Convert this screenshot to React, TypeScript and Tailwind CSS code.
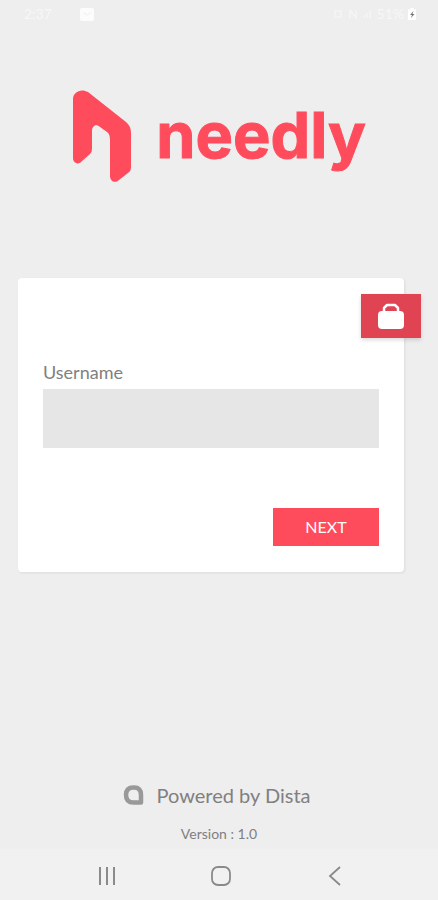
import React from "react";

function StatusBar() {
  return (
    <div className="flex h-7 items-center justify-between pr-[22px] pl-6 text-sm text-[#f7f7f7]">
      <div className="flex items-center">
        <span>2:37</span>
        <svg className="ml-7 h-[13px] w-[14px]" viewBox="0 0 14 13" aria-hidden="true">
          <rect width="14" height="13" rx="2" fill="#fcfcfc" />
          <path d="M3 4.500 7 7l4-2.500" fill="none" stroke="#f0f0f0" />
        </svg>
      </div>
      <div className="flex items-center gap-1">
        <svg className="h-3 w-10" viewBox="0 0 40 12" fill="none" stroke="#f5f5f5" strokeWidth="1.500" aria-hidden="true">
          <path d="M2 3h6v6H2zM17 2v8M17 2l6 8V2M31 10V7M34 10V5M37 10V2" />
        </svg>
        <span>51%</span>
        <svg className="h-3 w-2" viewBox="0 0 8 12" aria-hidden="true">
          <path d="M2.500 0h3v1.500H8V12H0V1.500h2.500z" fill="#fff" />
          <path d="M5.500 3 2 7h2l-1 3 3.500-4h-2z" fill="#777" />
        </svg>
      </div>
    </div>
  );
}

function Logo() {
  return (
    <h1 className="flex items-start justify-center pt-[61px] text-[#ff4c5d]">
      <svg className="h-[94px] w-[60px]" viewBox="0 0 60 94" fill="currentColor" aria-hidden="true">
        <path d="M1 10C1 3 9-1 16 3L54 33Q59 37 59 44V79Q59 82 56 84L47 91C43 95 38 92 38 87V51Q38 45 35 43L28 38C24 34 20 37 20 42V60Q20 63 18 65L9 73C6 76 1 74 1 69Z" />
      </svg>
      <span className="ml-6 pt-1.5 font-['Inter','Lato',sans-serif] text-[63px] leading-[80px] font-bold [-webkit-text-stroke:1px_#ff4c5d] [stroke-linejoin:round]">
        needly
      </span>
    </h1>
  );
}

function LoginCard() {
  return (
    <form
      className="relative mt-[95px] mr-[34px] ml-[18px] rounded-[4px] bg-white px-[25px] pt-[82px] pb-[26px] shadow-[1px_1px_3px_rgba(0,0,0,0.08)]"
      onSubmit={(e) => e.preventDefault()}
    >
      <button
        type="button"
        aria-label="Unlock"
        className="absolute top-4 -right-[17px] flex h-11 w-[60px] items-center justify-center bg-[#e04453] shadow-[0_2px_4px_rgba(0,0,0,0.15)]"
      >
        <svg className="h-[27px] w-[26px]" viewBox="0 0 26 27" aria-hidden="true">
          <path d="M6 10V5L9 2H17L20 5V10" fill="none" stroke="#fff" strokeWidth="2.500" strokeLinejoin="round" />
          <rect x="0" y="8" width="26" height="18" rx="4" fill="#fff" />
        </svg>
      </button>
      <label htmlFor="username" className="block text-lg leading-6 text-[#808080]">
        Username
      </label>
      <input
        id="username"
        type="text"
        className="mt-[5px] block h-[59px] w-full bg-[#e6e6e6] px-3 text-lg text-[#555] outline-none"
      />
      <div className="mt-[60px] flex justify-end">
        <button type="submit" className="h-[38px] w-[106px] bg-[#ff4c5d] text-base text-white">
          NEXT
        </button>
      </div>
    </form>
  );
}

function Footer() {
  return (
    <footer className="mt-auto flex flex-col items-center pb-[5px] text-[#808080]">
      <div className="flex items-center gap-3 pr-1">
        <svg className="h-5 w-[21px]" viewBox="0 0 21 20" fill="none" aria-hidden="true">
          <path d="M10.500 2.500H11Q18 2.500 18 10V17.500H10.500Q3 17.500 3 10T10.500 2.500Z" stroke="#999" strokeWidth="4.500" strokeLinejoin="round" />
        </svg>
        <span className="text-xl leading-7">Powered by Dista</span>
      </div>
      <p className="mt-[15px] text-sm leading-5">Version : 1.0</p>
    </footer>
  );
}

function NavBar() {
  return (
    <nav className="flex h-[51px] items-center justify-center gap-[90px] bg-[#f1f1f1] pt-[3px] pl-1 text-[#8a8a8a]">
      <button type="button" aria-label="Recent apps">
        <svg className="size-6" viewBox="0 0 24 24" fill="none" stroke="currentColor" strokeWidth="2">
          <path d="M5 3V21M12 3V21M19 3V21" />
        </svg>
      </button>
      <button type="button" aria-label="Home">
        <svg className="size-6" viewBox="0 0 24 24" fill="none" stroke="currentColor" strokeWidth="1.800">
          <rect x="3" y="3" width="18" height="18" rx="6" />
        </svg>
      </button>
      <button type="button" aria-label="Back">
        <svg className="size-6" viewBox="0 0 24 24" fill="none" stroke="currentColor" strokeWidth="1.800">
          <path d="M17 3 7 12l10 9" />
        </svg>
      </button>
    </nav>
  );
}

export default function App() {
  return (
    <div className="flex min-h-screen flex-col overflow-x-hidden bg-[#eeeeee] font-['Lato','Noto_Sans',sans-serif]">
      <StatusBar />
      <main>
        <Logo />
        <LoginCard />
      </main>
      <Footer />
      <NavBar />
    </div>
  );
}
